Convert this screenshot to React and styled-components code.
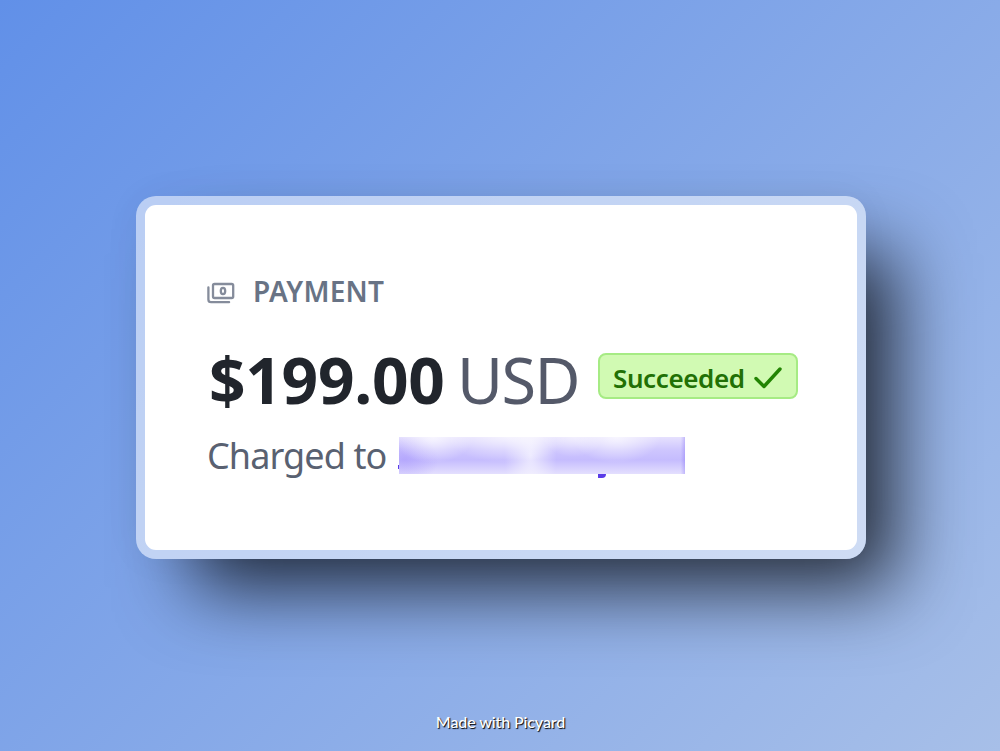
import React from 'react';
import styled, { createGlobalStyle } from 'styled-components';

const GlobalStyle = createGlobalStyle`
    * {
        box-sizing: border-box;
    }

    body {
        margin: 0;
    }
`;

const Backdrop = styled.main`
    display: flex;
    flex-direction: column;
    align-items: center;
    width: 100%;
    height: 751px;
    padding-top: 196px;
    padding-left: 2px;
    overflow: hidden;
    background: linear-gradient(135deg, #6190e8, #a7bfe8);
    font-family: "Noto Sans", "Open Sans", sans-serif;
`;

const Frame = styled.section`
    width: 730px;
    height: 363px;
    padding: 9px;
    border-radius: 20px;
    background-color: rgba(255, 255, 255, 0.52);
    box-shadow: 43px 43px 74px -14px rgba(0, 0, 0, 0.75), 0 0 40px rgba(0, 0, 0, 0.04);
`;

const Card = styled.div`
    display: flex;
    flex-direction: column;
    height: 100%;
    padding: 72px 0 0 62px;
    border-radius: 11px;
    background-color: #ffffff;
`;

const Line = styled.div`
    display: flex;
    align-items: center;
    height: ${props => props.$height}px;
    white-space: nowrap;
`;

const Label = styled.h1`
    width: 150px;
    margin: -4px 0 0 18px;
    font-size: 28px;
    font-weight: 600;
    line-height: 32px;
    letter-spacing: 0.2px;
    color: #687385;
`;

const Amount = styled.span`
    width: 250px;
    padding-left: 2px;
    font-size: 64px;
    font-weight: 700;
    line-height: 72px;
    letter-spacing: -0.3px;
    color: #21252c;
`;

const Currency = styled.span`
    width: 141px;
    font-size: 63px;
    font-weight: 400;
    line-height: 72px;
    letter-spacing: -1.6px;
    color: #545969;
`;

const Badge = styled.span`
    display: flex;
    align-items: center;
    justify-content: space-between;
    width: 200px;
    height: 46px;
    margin-top: -8px;
    padding: 3px 14px 0 13px;
    border: 2px solid #a6eb84;
    border-radius: 8px;
    background-color: #d1fab3;
    font-size: 26px;
    font-weight: 600;
    letter-spacing: -0.4px;
    color: #217005;
`;

const Caption = styled.span`
    width: 192px;
    font-size: 36px;
    line-height: 44px;
    letter-spacing: -0.9px;
    color: #596171;
`;

const Redacted = styled.span`
    position: relative;
    width: 286px;
    height: 37px;
    margin-top: -2px;
    background:
        linear-gradient(90deg, transparent 98.5%, rgba(95, 70, 240, 0.25)),
        radial-gradient(ellipse 60px 26px at 38% 0, rgba(255, 255, 255, 0.6), transparent),
        radial-gradient(ellipse 40px 26px at 12% 0, rgba(255, 255, 255, 0.7), transparent),
        radial-gradient(ellipse 44px 26px at 76% 0, rgba(255, 255, 255, 0.7), transparent),
        radial-gradient(ellipse 30px 20px at 61% 0, rgba(255, 255, 255, 0.5), transparent),
        radial-gradient(ellipse 26px 60px at 46% 50%, rgba(255, 255, 255, 0.65), transparent),
        radial-gradient(ellipse 34px 26px at 2% 60%, rgba(165, 148, 252, 0.5), transparent),
        linear-gradient(180deg, #e6e1fe, #cec6fe 35%, #c5bcfe 62%, #e4dffe);

    /* tips of the letters that stick out from under the blur */
    &::before,
    &::after {
        content: "";
        position: absolute;
        background-color: #5a3ce8;
    }

    &::before {
        left: -1px;
        bottom: 5px;
        width: 1px;
        height: 4px;
    }

    &::after {
        left: 199px;
        top: 37px;
        width: 8px;
        height: 4px;
        border-radius: 0 0 8px 1px;
    }
`;

const Credit = styled.footer`
    margin-top: 152px;
    padding-right: 1px;
    font-family: Lato, sans-serif;
    font-size: 16px;
    font-weight: 500;
    line-height: 22px;
    letter-spacing: -0.1px;
    color: #ffffff;
    text-shadow: 1px 1px 1px #000000;
`;

const CashIcon = () => (
    <svg width="28" height="22" viewBox="0 0 28 22" fill="none" stroke="#858c9b" strokeWidth="2.3">
        <rect x="6" y="2" width="20.2" height="14" rx="1.5" />
        <path d="M1.4 5.5v12q0 2.7 2.7 2.7h18" strokeLinecap="round" />
        <ellipse cx="16" cy="9" rx="2.2" ry="3.1" />
    </svg>
);

const CheckIcon = () => (
    <svg width="28" height="22" viewBox="0 0 28 22" fill="none" stroke="#228403" strokeWidth="3.4">
        <path d="M2 11.5l8 8L26 2" strokeLinecap="round" strokeLinejoin="round" />
    </svg>
);

const App = () => {
    return (
        <>
            <GlobalStyle />
            <Backdrop>
                <Frame>
                    <Card>
                        <Line $height={32}>
                            <CashIcon />
                            <Label>PAYMENT</Label>
                        </Line>
                        <Line $height={142}>
                            <Amount>$199.00</Amount>
                            <Currency>USD</Currency>
                            <Badge>
                                Succeeded
                                <CheckIcon />
                            </Badge>
                        </Line>
                        <Line $height={10}>
                            <Caption>Charged to</Caption>
                            <Redacted />
                        </Line>
                    </Card>
                </Frame>
                <Credit>Made with Picyard</Credit>
            </Backdrop>
        </>
    );
};

export default App;
